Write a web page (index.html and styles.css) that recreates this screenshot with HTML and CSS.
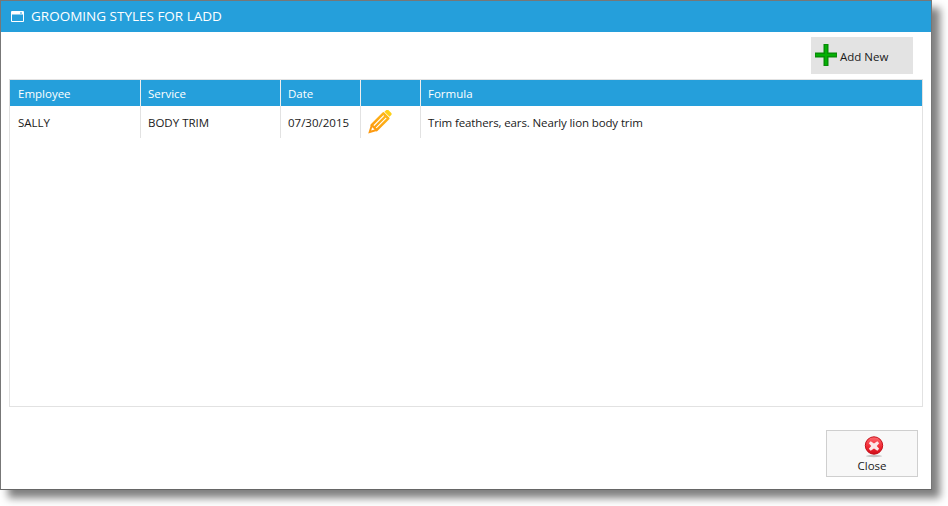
FILE: index.html
```html
<!DOCTYPE html>
<html lang="en">
<head>
<meta charset="utf-8">
<title>Grooming Styles</title>
<link rel="stylesheet" href="styles.css">
</head>
<body>
<div class="window">
  <header class="titlebar">
    <svg class="win-icon" width="14" height="12" viewBox="0 0 14 12"><path d="M.5.5h12v10H.5z" fill="none" stroke="#fff"/><path d="M1 1h11v2.500H1z" fill="#fff"/><path d="M9 1.500h2v1H9z" fill="#259fdb"/></svg>
    <span class="title-text">GROOMING STYLES FOR LADD</span>
  </header>
  <div class="toolbar">
    <button class="add-btn">
      <svg class="add-icon" width="22" height="22" viewBox="0 0 22 22"><path d="M8.500 0h5v8.500H22v5h-8.500V22h-5v-8.500H0v-5h8.500z" fill="#078e07"/><path d="M10 1h2v9h9v2h-9v9h-2v-9H1v-2h9z" fill="#04b004"/></svg>
      <span>Add New</span>
    </button>
  </div>
  <div class="grid">
    <div class="row head">
      <div class="c c1">Employee</div><div class="c c2">Service</div><div class="c c3">Date</div><div class="c c4"></div><div class="c c5">Formula</div>
    </div>
    <div class="row body-row">
      <div class="c c1">SALLY</div><div class="c c2">BODY TRIM</div><div class="c c3">07/30/2015</div>
      <div class="c c4">
        <svg width="24" height="24" viewBox="1.500 1 24 24.500"><defs><linearGradient id="p" gradientUnits="userSpaceOnUse" x1="2" y1="25" x2="24" y2="3"><stop offset="0" stop-color="#fd9410"/><stop offset="1" stop-color="#fdbc18"/></linearGradient></defs><path d="M5 16.500L17 4.500l5 5L10 21.500z" fill="#fff" stroke="url(#p)" stroke-width="2.600" stroke-linejoin="round"/><path d="M8 18.500L19 7.500" stroke="url(#p)" stroke-width="2.200"/><path d="M18 2.800l2-1.800a1.500 1.500 0 0 1 2 0l3 3a1.500 1.500 0 0 1 0 2l-1.800 2z" fill="#fdd017"/><path d="M1.500 25l2.600-8.500 6 6z" fill="#fd9a10"/><path d="M4.500 22l1-3.500 2.500 2.500z" fill="#fff"/></svg>
      </div>
      <div class="c c5">Trim feathers, ears. Nearly lion body trim</div>
    </div>
  </div>
  <footer class="footer">
    <button class="close-btn">
      <svg class="close-icon" width="22" height="22" viewBox="0 0 22 22"><defs><linearGradient id="r" x1="0" y1="0" x2="0" y2="1"><stop offset="0" stop-color="#ff6a70"/><stop offset=".55" stop-color="#f22c36"/><stop offset="1" stop-color="#d00c18"/></linearGradient></defs><ellipse cx="11" cy="20" rx="8" ry="1.200" fill="#c4c4c4"/><circle cx="11" cy="9.500" r="8.700" fill="url(#r)" stroke="#c4101a"/><path d="M7.700 5.300L11 7.500l3.300-2.200 1.900 1.900L13.800 10l2.400 2.800-1.900 1.900L11 12.500l-3.300 2.200-1.900-1.900L8.200 10 5.800 7.200z" fill="#fbe8e8"/></svg>
      <span>Close</span>
    </button>
  </footer>
</div>
</body>
</html>
```
FILE: styles.css
```css
* { box-sizing: border-box; }
html, body { margin: 0; height: 100%; background: #fff; overflow: hidden; }
body { font-family: "Open Sans", "Noto Sans", sans-serif; font-size: 11.500px; color: #1a1a1a; }
.window {
  width: 932px; height: 490px;
  background: #fff;
  border: 1px solid #777;
  border-bottom-color: #666;
  box-shadow: 8px 8px 8px rgba(0,0,0,.5);
  display: flex; flex-direction: column;
}
.titlebar {
  height: 31px; flex: none;
  background: #259fdb; color: #fff;
  display: flex; align-items: center; gap: 6px;
  padding-left: 10px;
  font-size: 13.500px;
}
.title-text { padding-bottom: 2px; }
.toolbar { height: 47px; flex: none; display: flex; justify-content: flex-end; align-items: flex-start; padding: 5px 18px 0 0; }
button { font: inherit; color: inherit; cursor: pointer; }
.add-btn {
  width: 102px; height: 37px;
  background: #e3e3e3; border: 0; padding: 0 0 0 4px;
  display: flex; align-items: center; gap: 3px;
}
.add-btn span { padding-top: 1px; }
.add-icon { margin-top: -2px; }
.grid { flex: none; height: 328px; margin: 0 8px; border: 1px solid #e2e2e2; }
.row { display: flex; }
.head { height: 26px; background: #259fdb; color: #fff; }
.head .c { border-right: 1px solid #eee; }
.head .c5 { border-right: 0; }
.body-row { height: 32px; }
.body-row .c { border-right: 1px solid #e2e2e2; }
.body-row .c5 { border-right: 0; letter-spacing: -.12px; }
.c { display: flex; align-items: center; padding-left: 7px; flex: none; }
.c1 { width: 131px; padding-left: 8px; }
.c2 { width: 140px; }
.c3 { width: 80px; }
.c4 { width: 60px; padding-left: 7px; }
.c5 { flex: 1; }
.footer { flex: 1; display: flex; justify-content: flex-end; align-items: flex-start; padding: 23px 13px 0 0; }
.close-btn {
  width: 92px; height: 47px;
  background: #f8f8f8; border: 1px solid #cfcfcf; padding: 5px 0 0;
  display: flex; flex-direction: column; align-items: center; gap: 0;
}
.close-icon { margin-left: 4px; }
```
